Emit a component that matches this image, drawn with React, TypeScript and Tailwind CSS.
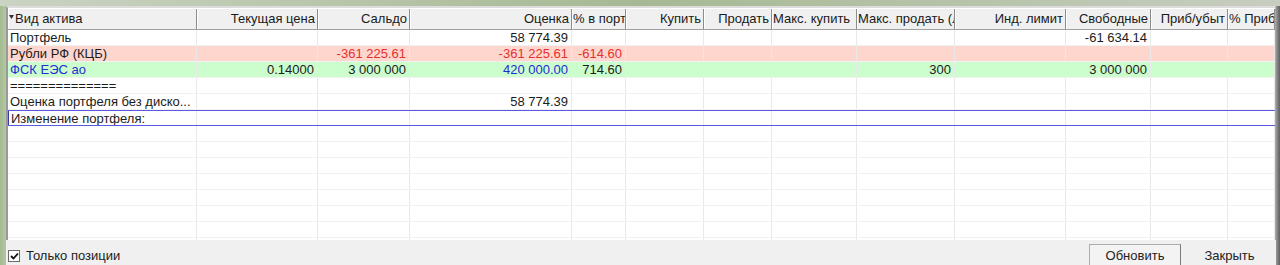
import React from "react";

const GRID =
  "grid grid-cols-[189px_121px_92px_162px_54px_78px_68px_85px_98px_111px_85px_77px_47px]";

type H = { t: string; a: "l" | "r" };
const headers: H[] = [
  { t: "Вид актива", a: "l" },
  { t: "Текущая цена", a: "r" },
  { t: "Сальдо", a: "r" },
  { t: "Оценка", a: "r" },
  { t: "% в порт", a: "l" },
  { t: "Купить", a: "r" },
  { t: "Продать", a: "r" },
  { t: "Макс. купить", a: "l" },
  { t: "Макс. продать (лоты)", a: "l" },
  { t: "Инд. лимит", a: "r" },
  { t: "Свободные", a: "r" },
  { t: "Приб/убыт", a: "r" },
  { t: "% Прибыли", a: "l" },
];

type Cell = { t: string; c?: string };
type Row = { bg: string; cells: Record<number, Cell>; focus?: boolean };

const RED = "text-[#e5302f]";
const BLUE = "text-[#1c2fd4]";

const rows: Row[] = [
  { bg: "bg-white", cells: { 0: { t: "Портфель" }, 3: { t: "58 774.39" }, 10: { t: "-61 634.14" } } },
  {
    bg: "bg-[#ffd6cd]",
    cells: {
      0: { t: "Рубли РФ (КЦБ)" },
      2: { t: "-361 225.61", c: RED },
      3: { t: "-361 225.61", c: RED },
      4: { t: "-614.60", c: RED },
    },
  },
  {
    bg: "bg-[#ccfdcc]",
    cells: {
      0: { t: "ФСК ЕЭС ао", c: BLUE },
      1: { t: "0.14000" },
      2: { t: "3 000 000" },
      3: { t: "420 000.00", c: BLUE },
      4: { t: "714.60" },
      8: { t: "300" },
      10: { t: "3 000 000" },
    },
  },
  { bg: "bg-white", cells: { 0: { t: "==============" } } },
  { bg: "bg-white", cells: { 0: { t: "Оценка портфеля без диско..." }, 3: { t: "58 774.39" } } },
  { bg: "bg-white", cells: { 0: { t: "Изменение портфеля:" } }, focus: true },
];

const EMPTY_COUNT = 9;

function DataRow({ row }: { row: Row }) {
  return (
    <div
      className={`${GRID} h-[16px] shrink-0 ${row.bg} ${
        row.focus
          ? "border-t border-b border-t-[#5a5ae0] border-b-[#5a5ae0]"
          : "border-b border-b-[#f1f1f1]"
      }`}
    >
      {headers.map((h, i) => {
        const cell = row.cells[i];
        return (
          <div
            key={i}
            className={`h-full overflow-hidden whitespace-nowrap border-r border-r-[#e9e9e9] flex items-center leading-none ${
              i === 0 ? "justify-start pl-[2px]" : "justify-end pr-[3px]"
            } ${cell?.c ?? "text-[#1c1c1c]"} ${row.focus && i === 0 ? "border-l border-l-[#3a3aa8]" : ""}`}
          >
            {cell ? cell.t : ""}
          </div>
        );
      })}
    </div>
  );
}

export default function App() {
  return (
    <div
      className="w-[1280px] h-[265px] overflow-hidden bg-[#f0f0f0] flex flex-col text-[13px] text-[#1c1c1c]"
      style={{ fontFamily: '"Liberation Sans", Arial, sans-serif' }}
    >
      <div className="h-[6px] shrink-0 bg-gradient-to-r from-[#cbd3c3] via-[#a6b993] to-[#c7cdc0]" />
      <div className="flex flex-1 min-h-0">
        <div className="w-[6px] shrink-0 bg-gradient-to-r from-[#a4ba90] to-[#b3c6a1]" />
        <div className="flex-1 flex flex-col min-w-0">
          <div className="h-[234px] shrink-0 overflow-hidden bg-white border-l-2 border-t-2 border-r border-l-[#9a9a9a] border-t-[#dcdcdc] border-r-[#a8a8a8] flex flex-col">
            {/* header */}
            <div className={`${GRID} h-[22px] shrink-0 bg-[#f0f0f0] border-t border-t-white border-b border-b-[#a0a0a0]`}>
              {headers.map((h, i) => (
                <div
                  key={i}
                  className={`h-full overflow-hidden whitespace-nowrap flex items-center border-r border-r-[#8c8c8c] shadow-[inset_1px_0_0_#ffffff] ${
                    h.a === "l" ? "justify-start pl-[1px]" : "justify-end pr-[2px]"
                  }`}
                >
                  {i === 0 && (
                    <svg width="5" height="4" viewBox="0 0 5 4" className="mr-[1px] shrink-0 -mt-[4px]">
                      <path d="M0 0 H5 L2.5 4 Z" fill="#303030" />
                    </svg>
                  )}
                  <span className="text-[#1a1a1a]">{h.t}</span>
                </div>
              ))}
            </div>
            {rows.map((r, i) => (
              <DataRow key={i} row={r} />
            ))}
            {Array.from({ length: EMPTY_COUNT }).map((_, i) => (
              <DataRow key={"e" + i} row={{ bg: "bg-white", cells: {} }} />
            ))}
          </div>
          {/* bottom bar */}
          <div className="flex-1 flex items-end justify-between pl-[2px] pr-[3px]">
            <label className="flex items-center gap-[6px] h-[19px]">
              <span className="w-[12px] h-[12px] bg-white border border-[#6a6a6a] flex items-center justify-center">
                <svg width="9" height="8" viewBox="0 0 9 8">
                  <path d="M1 4 L3.5 6.5 L8 1.5" stroke="#111" strokeWidth="1.8" fill="none" />
                </svg>
              </span>
              <span>Только позиции</span>
            </label>
            <div className="flex items-end gap-[5px]">
              <button className="w-[92px] h-[21px] pt-[2px] bg-[#f3f3f3] border border-[#adadad] border-r-[#7a7a7a] border-b-0 text-[#222] flex items-center justify-center">
                Обновить
              </button>
              <button className="w-[87px] h-[21px] pt-[2px] bg-[#f0f0f0] text-[#222] flex items-center justify-center">
                Закрыть
              </button>
            </div>
          </div>
        </div>
        <div className="w-[4px] shrink-0 bg-gradient-to-r from-[#9a9a9a] to-[#5e5e5e]" />
      </div>
    </div>
  );
}
